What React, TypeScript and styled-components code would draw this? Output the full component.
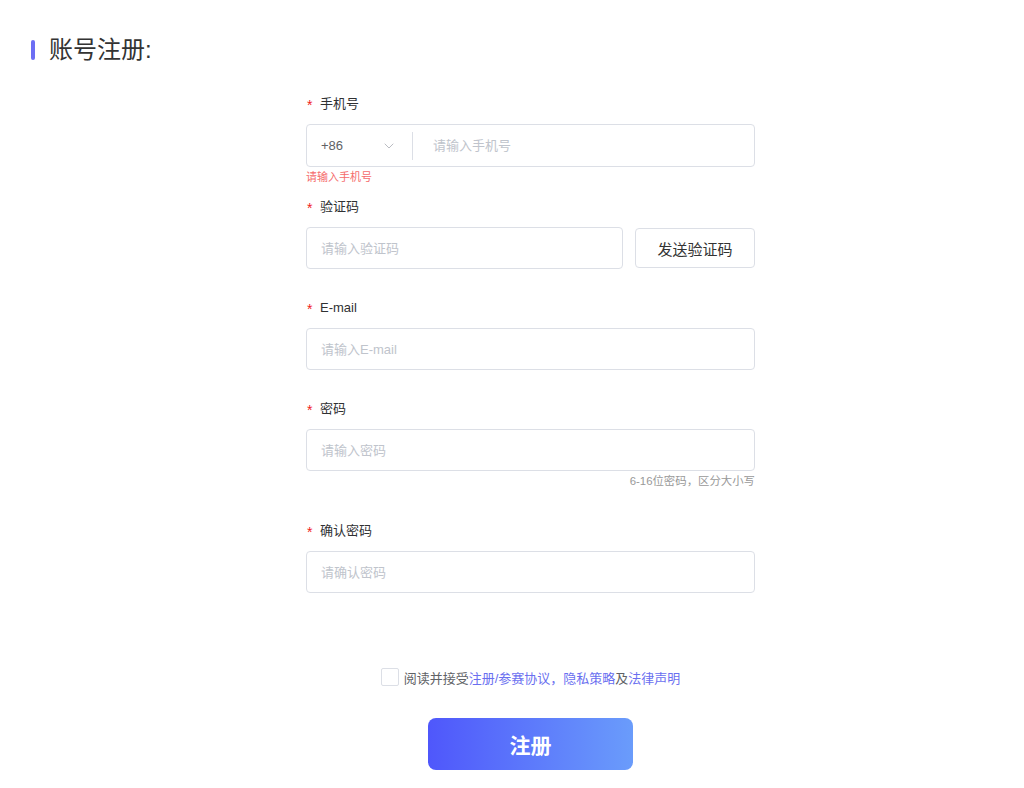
import React from "react";
import styled, { createGlobalStyle } from "styled-components";
import { ChevronDown } from "lucide-react";

const GlobalStyle = createGlobalStyle`
  html, body { margin: 0; padding: 0; background: #fff; }
  body { font-family: "Liberation Sans", "Noto Sans CJK SC", sans-serif; color: #333; }
  * { box-sizing: border-box; }
`;

const Page = styled.div`
  width: 1024px;
  min-height: 788px;
  padding-top: 36px;
`;

const TitleRow = styled.div`
  display: flex;
  align-items: center;
  gap: 14px;
  padding-left: 31px;
  height: 28px;
`;

const TitleBar = styled.span`
  width: 4px;
  height: 20px;
  border-radius: 2px;
  background: #6c6ef4;
`;

const Title = styled.h1`
  margin: 0;
  font-size: 24px;
  font-weight: 400;
  line-height: 28px;
  color: #333;
`;

const Form = styled.div`
  width: 449px;
  margin: 30px 0 0 306px;
  display: flex;
  flex-direction: column;
`;

const Item = styled.div<{ $after: number }>`
  display: flex;
  flex-direction: column;
  margin-bottom: ${(p) => p.$after}px;
`;

const Label = styled.div`
  height: 20px;
  line-height: 20px;
  font-size: 13px;
  color: #303133;
  display: flex;
  align-items: center;
  margin-bottom: 10px;
`;

const Star = styled.span`
  color: #f02020;
  font-size: 14px;
  width: 13px;
  margin-left: 1px;
  line-height: 20px;
  padding-top: 2px;
`;

const Box = styled.div<{ $h?: number }>`
  flex: none;
  height: ${(p) => p.$h ?? 42}px;
  border: 1px solid #dcdfe6;
  border-radius: 4px;
  display: flex;
  align-items: center;
  background: #fff;
`;

const GrowBox = styled(Box)`
  flex: 1;
`;

const Input = styled.input`
  flex: 1;
  min-width: 0;
  border: none;
  outline: none;
  background: transparent;
  height: 100%;
  padding: 0 14px;
  font-size: 13px;
  font-family: inherit;
  color: #606266;
  &::placeholder { color: #c0c4cc; }
`;

const Select = styled.div`
  width: 105px;
  height: 100%;
  display: flex;
  align-items: center;
  justify-content: space-between;
  padding: 0 15px 0 14px;
  font-size: 13px;
  color: #606266;
`;

const Divider = styled.span`
  width: 1px;
  height: 28px;
  background: #dcdfe6;
`;

const PhoneInput = styled(Input)`
  padding-left: 20px;
`;

const Row = styled.div`
  display: flex;
  align-items: center;
  gap: 12px;
`;

const GhostButton = styled.button`
  width: 120px;
  height: 40px;
  border: 1px solid #dcdfe6;
  border-radius: 4px;
  background: #fff;
  font-family: inherit;
  font-size: 15px;
  color: #333;
  cursor: pointer;
`;

const Note = styled.div<{ $error?: boolean; $right?: boolean }>`
  height: 20px;
  line-height: 20px;
  font-size: ${(p) => (p.$right ? 11.4 : 11)}px;
  color: ${(p) => (p.$error ? "#f56c6c" : "#999")};
  text-align: ${(p) => (p.$right ? "right" : "left")};
`;

const Agree = styled.label`
  margin-top: 45px;
  display: flex;
  align-items: center;
  justify-content: center;
  gap: 5px;
  height: 20px;
  font-size: 13px;
  color: #606266;
`;

const Check = styled.span`
  width: 18px;
  height: 18px;
  border: 1px solid #dcdfe6;
  border-radius: 2px;
  background: #fff;
`;

const Link = styled.a`
  color: #6a6ff0;
  text-decoration: none;
`;

const Submit = styled.button`
  align-self: center;
  margin-top: 31px;
  width: 205px;
  height: 52px;
  border: none;
  border-radius: 8px;
  background: linear-gradient(90deg, #4f57fb 0%, #6a9cfb 100%);
  color: #fff;
  font-family: "Noto Sans CJK SC", sans-serif;
  font-size: 21px;
  font-weight: 700;
  cursor: pointer;
`;

export default function App() {
  return (
    <Page>
      <GlobalStyle />
      <TitleRow>
        <TitleBar />
        <Title>账号注册:</Title>
      </TitleRow>
      <Form>
        <Item $after={10}>
          <Label><Star>*</Star>手机号</Label>
          <Box $h={43}>
            <Select>
              <span>+86</span>
              <ChevronDown size={16} strokeWidth={1.2} color="#a8abb2" />
            </Select>
            <Divider />
            <PhoneInput placeholder="请输入手机号" />
          </Box>
          <Note $error>请输入手机号</Note>
        </Item>
        <Item $after={29}>
          <Label><Star>*</Star>验证码</Label>
          <Row>
            <GrowBox>
              <Input placeholder="请输入验证码" />
            </GrowBox>
            <GhostButton>发送验证码</GhostButton>
          </Row>
        </Item>
        <Item $after={29}>
          <Label><Star>*</Star>E-mail</Label>
          <Box>
            <Input placeholder="请输入E-mail" />
          </Box>
        </Item>
        <Item $after={30}>
          <Label><Star>*</Star>密码</Label>
          <Box>
            <Input type="password" placeholder="请输入密码" />
          </Box>
          <Note $right>6-16位密码，区分大小写</Note>
        </Item>
        <Item $after={29}>
          <Label><Star>*</Star>确认密码</Label>
          <Box>
            <Input type="password" placeholder="请确认密码" />
          </Box>
        </Item>
        <Agree>
          <Check />
          <span>
            阅读并接受<Link>注册/参赛协议，隐私策略</Link>及<Link>法律声明</Link>
          </span>
        </Agree>
        <Submit>注册</Submit>
      </Form>
    </Page>
  );
}
